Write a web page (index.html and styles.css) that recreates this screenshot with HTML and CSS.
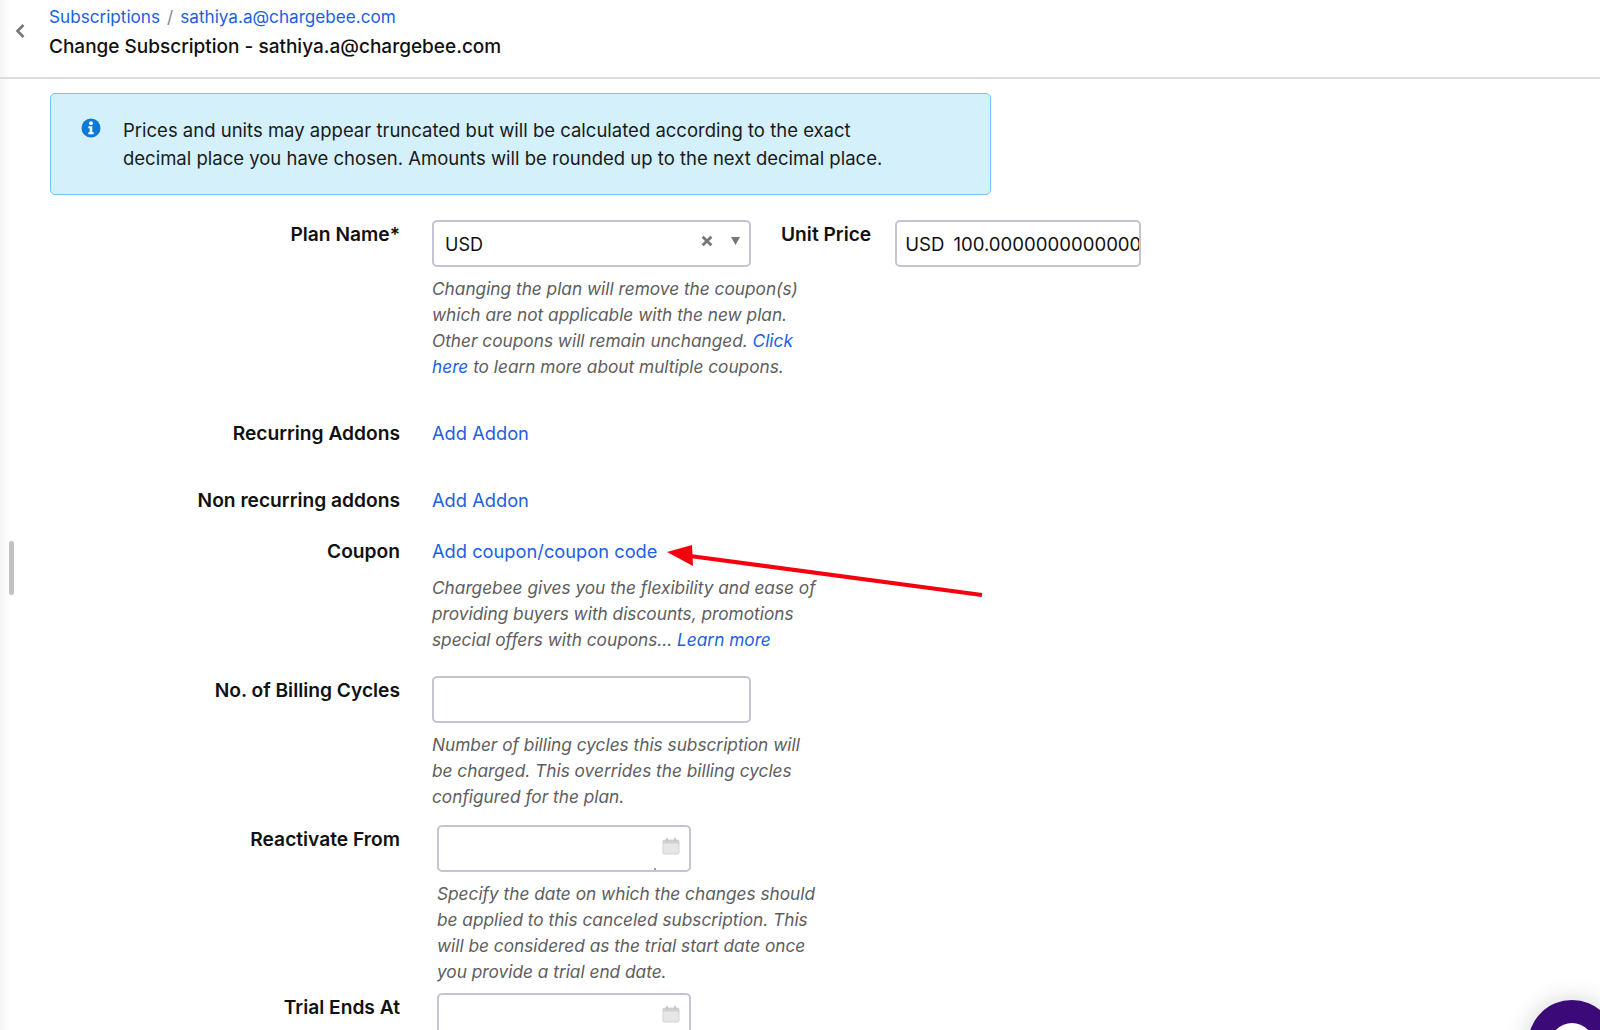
FILE: index.html
```html
<!DOCTYPE html>
<html lang="en">
<head>
<meta charset="utf-8">
<title>Change Subscription</title>
<link rel="stylesheet" href="styles.css">
</head>
<body>
<div class="page">
  <div class="edge"></div>
  <div class="thumb"></div>
  <header class="topbar">
    <svg class="back" width="12" height="16" viewBox="0 0 12 16"><path d="M9.5 2 3.5 8l6 6" fill="none" stroke="#777" stroke-width="2.6"/></svg>
    <div class="titles">
      <div class="crumbs"><a>Subscriptions</a><span class="sep">/</span><a>sathiya.a@chargebee.com</a></div>
      <h1>Change Subscription - sathiya.a@chargebee.com</h1>
    </div>
  </header>
  <main class="content">
    <div class="alert">
      <svg class="info" width="20" height="20" viewBox="0 0 20 20"><circle cx="10" cy="10" r="9.5" fill="#0b7ad8"/><circle cx="10" cy="5.2" r="1.9" fill="#fff"/><path d="M7.4 8.2h3.9v6h1.4v2H7.4v-2h1.3v-4H7.4z" fill="#fff"/></svg>
      <p>Prices and units may appear truncated but will be calculated according to the exact<br>decimal place you have chosen. Amounts will be rounded up to the next decimal place.</p>
    </div>

    <section class="row row-plan">
      <label class="label label-box">Plan Name*</label>
      <div class="field">
        <div class="plan-line">
          <div class="box select">
            <span class="select-value">USD</span>
            <span class="select-icons">
              <svg width="12" height="12" viewBox="0 0 11 11"><path d="M1.5 1.5l8 8M9.5 1.5l-8 8" stroke="#777" stroke-width="2.6"/></svg>
              <svg width="9" height="8" viewBox="0 0 9 8"><path d="M0 0h9L4.5 8z" fill="#777"/></svg>
            </span>
          </div>
          <label class="label unit-label">Unit Price</label>
          <div class="box price"><span class="cur">USD</span><span class="num">100.0000000000000</span></div>
        </div>
        <p class="help">Changing the plan will remove the coupon(s)<br>which are not applicable with the new plan.<br>Other coupons will remain unchanged. <a>Click<br>here</a> to learn more about multiple coupons.</p>
      </div>
    </section>

    <section class="row row-recurring">
      <label class="label">Recurring Addons</label>
      <div class="field"><a class="link">Add Addon</a></div>
    </section>

    <section class="row row-nonrecurring">
      <label class="label">Non recurring addons</label>
      <div class="field"><a class="link">Add Addon</a></div>
    </section>

    <section class="row row-coupon">
      <label class="label">Coupon</label>
      <div class="field">
        <a class="link">Add coupon/coupon code</a>
        <p class="help help-coupon">Chargebee gives you the flexibility and ease of<br>providing buyers with discounts, promotions<br>special offers with coupons... <a>Learn more</a></p>
      </div>
    </section>

    <section class="row row-cycles">
      <label class="label label-box">No. of Billing Cycles</label>
      <div class="field">
        <div class="box wide"></div>
        <p class="help">Number of billing cycles this subscription will<br>be charged. This overrides the billing cycles<br>configured for the plan.</p>
      </div>
    </section>

    <section class="row row-reactivate">
      <label class="label label-box">Reactivate From</label>
      <div class="field date-field">
        <div class="box date">
          <svg class="cal" width="18" height="18" viewBox="0 0 18 18"><rect x="1" y="3" width="16" height="14" rx="1.5" fill="#e6e6e6" stroke="#d2d2d2"/><rect x="1" y="3" width="16" height="3.5" fill="#cfcfcf"/><path d="M5 1v3M13 1v3" stroke="#bdbdbd" stroke-width="1.5"/></svg>
          <span class="speck"></span>
        </div>
        <p class="help">Specify the date on which the changes should<br>be applied to this canceled subscription. This<br>will be considered as the trial start date once<br>you provide a trial end date.</p>
      </div>
    </section>

    <section class="row row-trial">
      <label class="label label-box">Trial Ends At</label>
      <div class="field date-field">
        <div class="box date">
          <svg class="cal" width="18" height="18" viewBox="0 0 18 18"><rect x="1" y="3" width="16" height="14" rx="1.5" fill="#e6e6e6" stroke="#d2d2d2"/><rect x="1" y="3" width="16" height="3.5" fill="#cfcfcf"/><path d="M5 1v3M13 1v3" stroke="#bdbdbd" stroke-width="1.5"/></svg>
        </div>
      </div>
    </section>
  </main>

  <svg class="arrow" width="330" height="60" viewBox="0 0 330 60"><path d="M322 55 30 16" stroke="#f5000f" stroke-width="4" fill="none"/><path d="M7 12 32 5 33 26z" fill="#f5000f"/></svg>
  <div class="chat"><div class="chat-hole"></div></div>
</div>
</body>
</html>
```
FILE: styles.css
```css
* { box-sizing: border-box; }
html, body { margin: 0; padding: 0; }
body {
  font-family: Inter, "Liberation Sans", sans-serif;
  font-size: 18px;
  color: #111;
  background: #fff;
}
.page {
  position: relative;
  width: 1600px;
  height: 1030px;
  overflow: hidden;
}
.edge {
  position: absolute;
  left: 0;
  top: 0;
  bottom: 0;
  width: 10px;
  background: linear-gradient(to right, #f4f4f4, #fff);
}
.thumb {
  position: absolute;
  left: 9px;
  top: 541px;
  width: 5px;
  height: 54px;
  border-radius: 2px;
  background: #c2c2c2;
}
.topbar {
  position: relative;
  height: 79px;
  border-bottom: 2px solid #dcdcdc;
  display: flex;
  align-items: flex-start;
  padding-left: 14px;
}
.back { margin-top: 23px; margin-right: 23px; }
.titles { padding-top: 5px; }
.crumbs { font-size: 17.15px; line-height: 24px; color: #888; }
.crumbs a { color: #1c5fe0; }
.sep { margin: 0 7px; }
h1 { margin: 6px 0 0; font-size: 19px; line-height: 24px; font-weight: 500; color: #111; }
.content { padding: 14px 0 0 50px; }
.alert {
  width: 941px;
  height: 102px;
  background: #d3f0fb;
  border: 1px solid #72c2f5;
  border-radius: 5px;
  display: flex;
  padding: 22px 0 0 30px;
}
.info { margin: 2px 22px 0 0; flex: none; }
.alert p { margin: 0; font-size: 18.5px; line-height: 28px; color: #1a1a1a; }
.row { display: flex; }
.label {
  flex: none;
  width: 350px;
  text-align: right;
  font-weight: 600;
  font-size: 19.2px;
  line-height: 22px;
  color: #111;
}
.label-box { padding-top: 3px; }
.field { margin-left: 32px; }
.date-field { margin-left: 37px; }
a { color: #1c5fe0; }
.link { display: block; margin-top: -1px; line-height: 24px; font-size: 18.3px; }
.help {
  margin: 0;
  font-style: italic;
  font-size: 17.25px;
  line-height: 26px;
  color: #5d5d5d;
  white-space: nowrap;
}
.box {
  height: 47px;
  background: #fff;
  border: 2px solid #c4c4d2;
  border-radius: 5px;
}
.plan-line { display: flex; align-items: flex-start; margin-bottom: 9px; }
.select {
  width: 319px;
  display: flex;
  align-items: center;
  justify-content: space-between;
  padding: 0 9px 0 11px;
  margin-right: 30px;
}
.select-value { padding-top: 1px; }
.select-icons { display: flex; align-items: center; gap: 18px; margin-top: -6px; }
.unit-label { width: auto; margin-right: 24px; line-height: 28px; }
.price {
  width: 246px;
  display: flex;
  align-items: center;
  padding-left: 8px;
  overflow: hidden;
  white-space: nowrap;
  font-size: 18.6px;
}
.cur { margin-right: 9px; }
.row-plan { margin-top: 25px; height: 202px; }
.row-recurring { height: 67px; }
.row-nonrecurring { height: 51px; }
.row-coupon { height: 136px; }
.help-coupon { margin-top: 12px; }
.row-cycles { height: 149px; }
.wide { width: 319px; margin-bottom: 9px; }
.row-reactivate { height: 168px; }
.date { width: 254px; position: relative; margin-bottom: 9px; }
.cal { position: absolute; right: 9px; top: 10px; }
.speck {
  position: absolute;
  left: 215px;
  bottom: 0;
  width: 2px;
  height: 2px;
  border-radius: 50%;
  background: #777;
}
.arrow {
  position: absolute;
  left: 660px;
  top: 540px;
  overflow: visible;
}
.chat {
  position: absolute;
  left: 1528px;
  top: 1000px;
  width: 88px;
  height: 88px;
  border-radius: 50%;
  background: #3b0a78;
  box-shadow: 0 0 0 3px #eee, 0 0 24px rgba(0,0,0,.18);
}
.chat-hole {
  position: absolute;
  left: 22px;
  top: 23px;
  width: 44px;
  height: 44px;
  border-radius: 50%;
  background: #fff;
}
```
